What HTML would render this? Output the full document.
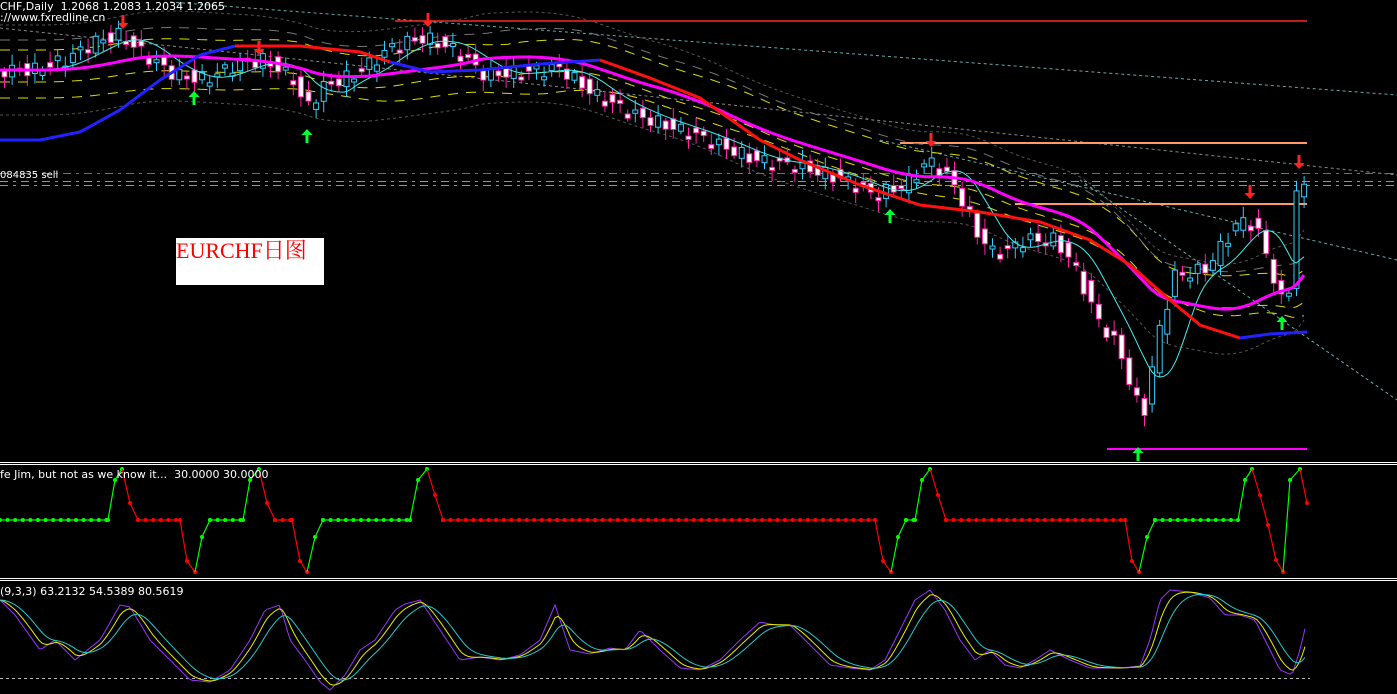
<!DOCTYPE html>
<html><head><meta charset="utf-8"><style>
html,body{margin:0;padding:0;background:#000;width:1397px;height:694px;overflow:hidden}
#c{position:absolute;left:0;top:0}
.t{position:absolute;color:#fff;font:11px "DejaVu Sans","Liberation Sans",sans-serif;white-space:nowrap}
#lab{position:absolute;left:176px;top:238px;width:148px;height:47px;background:#fff;color:#f00;font:22px "Liberation Serif","Noto Serif CJK SC",serif;line-height:26px}
</style></head><body>
<svg id="c" width="1397" height="694" xmlns="http://www.w3.org/2000/svg"></svg>
<div class="t" style="left:0;top:0">CHF,Daily &nbsp;1.2068 1.2083 1.2034 1.2065</div>
<div class="t" style="left:0;top:11px">://www.fxredline.cn</div>
<div class="t" style="left:0;top:170px;font-size:10px">084835 sell</div>
<div class="t" style="left:0;top:468px">fe Jim, but not as we know it... &nbsp;30.0000 30.0000</div>
<div class="t" style="left:0;top:585px">(9,3,3) 63.2132 54.5389 80.5619</div>
<div id="lab">EURCHF日图</div>
<script>
(function(){
var s=document.getElementById('c'),h='';
function st(e){return e?'style="stroke-dasharray:'+e+'"':'';}
function pl(pts,c,w,dash){h+='<polyline fill="none" stroke="'+c+'" stroke-width="'+w+'" '+st(dash)+' points="'+pts.map(function(p){return p[0].toFixed(1)+','+p[1].toFixed(1);}).join(' ')+'"/>';}
function ln(x1,y1,x2,y2,c,w,dash){h+='<line x1="'+x1.toFixed(1)+'" y1="'+y1.toFixed(1)+'" x2="'+x2.toFixed(1)+'" y2="'+y2.toFixed(1)+'" stroke="'+c+'" stroke-width="'+w+'" '+st(dash)+'/>';}
function interp(k,x){for(var i=0;i<k.length-1;i++){if(x<=k[i+1][0]){var t=(x-k[i][0])/(k[i+1][0]-k[i][0]);return k[i][1]+t*(k[i+1][1]-k[i][1]);}}return k[k.length-1][1];}
function curve(k,x0,x1,sp){var r=[];for(var x=x0;x<=x1;x+=sp)r.push([x,interp(k,x)]);return r;}
ln(0,462.5,1397,462.5,'#fff',1);ln(0,464.5,1397,464.5,'#fff',1);
ln(0,578.5,1397,578.5,'#fff',1);ln(0,580.5,1397,580.5,'#fff',1);
ln(170,2,1397,95,'#6aa',1,'3 3');
ln(0,28,1397,175,'#888',1,'3 3');
ln(880,140,1397,260,'#6aa',1,'3 3');
ln(1080,180,1397,400,'#6aa',1,'3 3');
ln(395,21,1307,21,'#f22',1.5);
ln(900,143,1307,143,'#f96',2);
ln(1015,204,1307,204,'#f96',2);
ln(1107,449,1307,449,'#f0f',2);
ln(0,173.5,1397,173.5,'#f33',1,'8 5 3 5');
ln(0,181.5,1397,181.5,'#4c4',1,'8 5 3 5');
ln(0,185.5,1397,185.5,'#4c4',1,'8 5 3 5');
ln(0,678.5,1310,678.5,'#bbb',1,'3 3');
var P=[[0,70],[40,70],[70,60],[100,42],[125,35],[150,55],[180,75],[210,80],[240,65],[270,60],[300,80],[310,110],[330,85],[360,75],[400,45],[430,38],[460,50],[490,75],[530,72],[565,68],[600,95],[640,115],[700,135],[760,160],[800,165],[850,180],[880,195],[910,185],[935,160],[960,185],[980,230],[1000,255],[1030,240],[1060,240],[1080,265],[1100,315],[1125,350],[1140,400],[1150,410],[1162,340],[1180,275],[1210,270],[1245,220],[1260,225],[1272,255],[1285,300],[1293,305],[1300,190]];
function smooth(k,x0,x1,win,off){var r=[];for(var x=x0;x<=x1;x+=4){var a=0,n=0;for(var d=-win;d<=0;d+=4){a+=interp(k,Math.max(0,x+d));n++;}r.push([x,a/n+(off||0)]);}return r;}
pl(smooth(P,0,1305,160,-45),'#555',1,'3 3');
pl(smooth(P,0,1305,160,45),'#555',1,'3 3');
pl(smooth(P,0,1305,200,-20),'#dd0',1,'10 8');
pl(smooth(P,0,1305,200,12),'#dd0',1,'10 8');
pl(smooth(P,0,1305,240,28),'#dd0',1,'10 8');
pl(smooth(P,0,1305,180,-30),'#777',1,'10 8');
var k=0;
for(var x=2;x<1305;x+=7.6,k++){
 var m=interp(P,x),n=interp(P,x+7.6),up=n<m;
 var o=m+Math.sin(k*1.7)*7,c=n+Math.cos(k*2.3)*7;
 up=c<o;
 var tp=Math.min(o,c),bt=Math.max(o,c);if(bt-tp<3)bt=tp+3;
 var col=up?'#3cf':'#f2a';
 ln(x+2.5,tp-3-Math.abs(Math.sin(k*1.3))*8,x+2.5,bt+3+Math.abs(Math.cos(k*0.9))*8,col,1);
 h+='<rect x="'+x.toFixed(1)+'" y="'+tp.toFixed(1)+'" width="5" height="'+(bt-tp).toFixed(1)+'" fill="'+(up?'#000':'#fff')+'" stroke="'+col+'" stroke-width="1"/>';
}
pl(smooth(P,0,1305,40),'#4ee',1);
pl(smooth(P,0,1305,160,0),'#f0f',3);
pl([[0,140],[40,140],[80,132],[120,110],[160,80],[200,55],[235,46]],'#22f',3);
pl([[235,46],[300,46],[360,52],[390,62]],'#f11',3);
pl([[390,62],[430,72],[480,70],[540,64],[600,60]],'#22f',3);
pl([[600,60],[650,78],[700,98],[760,140],[800,160],[860,185],[920,205],[980,212],[1040,222],[1090,240],[1130,265],[1170,300],[1200,325],[1240,338]],'#f11',3);
pl([[1240,338],[1270,334],[1307,332]],'#22f',3);
function arr(x,y,c,down){var d=down?1:-1;h+='<path d="M'+(x-1.5)+' '+(y-9*d)+'V'+(y-1*d)+'H'+(x-5.5)+'L'+x+' '+(y+5*d)+'L'+(x+5.5)+' '+(y-1*d)+'H'+(x+1.5)+'V'+(y-9*d)+'Z" fill="'+c+'"/>';}
[[123,24],[259,50],[428,22],[931,142],[1250,194],[1299,164]].forEach(function(a){arr(a[0],a[1],'#f22',true);});
[[194,96],[307,134],[890,214],[1138,452],[1282,321]].forEach(function(a){arr(a[0],a[1],'#0f3',false);});
var I=[[0,520],[108,520],[115,480],[122,469],[130,503],[138,520],[180,520],[187,561],[195,572],[202,537],[210,520],[243,520],[250,480],[259,469],[267,503],[275,520],[292,520],[300,561],[307,572],[315,537],[323,520],[410,520],[418,480],[427,469],[435,495],[443,520],[875,520],[883,561],[891,572],[898,537],[906,520],[915,520],[922,480],[930,469],[938,495],[946,520],[1125,520],[1132,561],[1139,572],[1147,537],[1155,520],[1238,520],[1245,480],[1252,469],[1260,495],[1268,525],[1276,560],[1283,572],[1290,480],[1300,469],[1307,503]];
function isGreen(x){return x<110||(x>=210&&x<245)||(x>=323&&x<412)||(x>=906&&x<917)||(x>=1155&&x<1240);}
function gcol(a,b){return b[1]<a[1]||(b[1]==a[1]&&isGreen(a[0]))?'#0f0':'#f00';}
for(var j=0;j<I.length-1;j++){var a=I[j],b=I[j+1],cc=gcol(a,b);ln(a[0],a[1],b[0],b[1],cc,1.2);
 if(a[1]==520&&b[1]==520){for(var xx=a[0];xx<b[0];xx+=7.6)h+='<circle cx="'+xx.toFixed(1)+'" cy="520" r="2" fill="'+cc+'"/>';}
 h+='<circle cx="'+b[0]+'" cy="'+b[1]+'" r="2" fill="'+cc+'"/>';}
var K=[[0,600],[15,615],[40,650],[55,640],[75,660],[100,640],[120,605],[130,607],[150,640],[170,660],[190,680],[210,682],[230,670],[250,640],[265,610],[280,605],[290,640],[305,660],[320,682],[330,690],[345,675],[360,650],[375,640],[395,610],[405,604],[420,600],[440,630],[460,660],[480,657],[500,660],[520,655],[540,640],[555,605],[570,650],[590,654],[610,648],[625,650],[640,630],[660,650],[680,668],[700,670],[720,660],[740,640],[760,622],[775,625],[790,625],[810,645],[830,665],[850,668],[870,670],[885,660],[900,630],[915,600],[930,590],[945,610],[960,640],[975,660],[990,650],[1005,665],[1020,668],[1035,660],[1050,650],[1070,660],[1090,668],[1120,668],[1140,666],[1150,640],[1160,600],[1170,590],[1190,592],[1210,598],[1225,615],[1240,615],[1255,620],[1265,640],[1280,670],[1292,675],[1300,650],[1307,620]];
var kp=curve(K,0,1307,3);pl(kp,'#93f',1);
function ema(arr,n){var r=[],v=arr[0][1];arr.forEach(function(p){v+=(p[1]-v)/n;r.push([p[0],v]);});return r;}
var d1=ema(kp,3),d2=ema(d1,4);pl(d1,'#ee0',1);pl(d2,'#2cc',1);
s.innerHTML=h;
})();
</script>
</body></html>
